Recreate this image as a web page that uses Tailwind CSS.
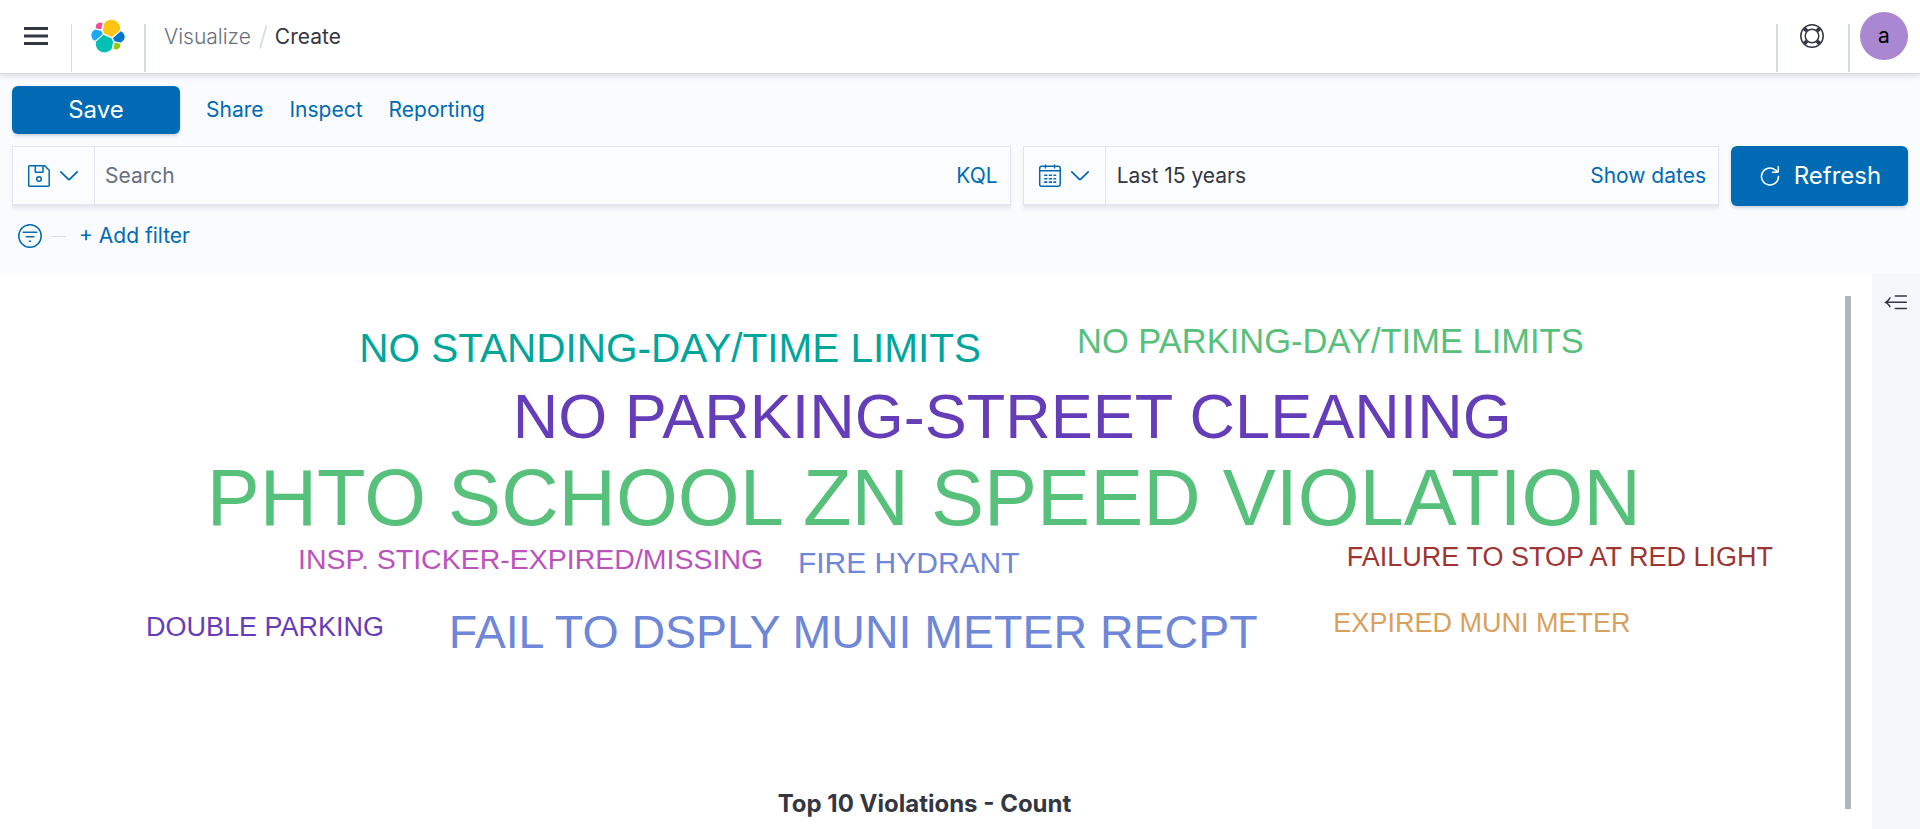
<!DOCTYPE html>
<html lang="en">
<head>
<meta charset="utf-8">
<title>Create - Visualize</title>
<script src="https://cdn.jsdelivr.net/npm/@tailwindcss/browser@4"></script>
</head>
<body class="flex min-h-screen flex-col bg-white font-[Inter,sans-serif] text-[21px] leading-8 text-[#343741]">

<header class="relative flex h-[74px] items-center justify-between border-b border-[#d3dae6] bg-white pb-px shadow-[0_3px_4px_rgba(152,162,179,0.25)]">
  <div class="flex h-full items-center">
    <button type="button" aria-label="Toggle navigation" class="flex w-[71px] justify-center">
      <svg class="size-6" viewBox="0 0 16 16" fill="currentColor"><path d="M0 2h16v2H0zM0 7h16v2H0zM0 12h16v2H0z"/></svg>
    </button>
    <a href="#" aria-label="Elastic home" class="flex h-12 w-[75px] items-center justify-center self-end border-l border-r-2 border-[#d3dae6]">
      <svg class="-mt-6 size-9" viewBox="0 0 32 32">
        <path fill="#FEC514" d="M12.58 13.787l7.002 3.211 7.066-6.213a7.849 7.849 0 0 0 .152-1.557c0-4.287-3.487-7.775-7.775-7.775a7.765 7.765 0 0 0-6.396 3.357l-1.176 6.11z"/>
        <path fill="#00BFB3" d="M5.333 21.215a7.876 7.876 0 0 0-.149 1.571c0 4.301 3.498 7.8 7.8 7.8a7.78 7.78 0 0 0 6.43-3.394l1.166-6.094-1.557-2.988-7.03-3.211z"/>
        <path fill="#F04E98" d="M5.288 9.067l4.8 1.137L11.14 4.73a3.785 3.785 0 0 0-6.054 3.012c0 .455.068.9.202 1.325z"/>
        <path fill="#1BA9F5" d="M4.872 10.214c-2.144.71-3.653 2.793-3.653 5.054a5.332 5.332 0 0 0 3.41 4.976l6.734-6.102-1.236-2.654z"/>
        <path fill="#93C90E" d="M20.873 27.186a3.782 3.782 0 0 0 6.059-2.991 3.77 3.77 0 0 0-.2-1.31l-4.79-1.12z"/>
        <path fill="#0077CC" d="M21.848 20.563l5.28 1.236a5.34 5.34 0 0 0 3.636-5.05 5.335 5.335 0 0 0-3.42-4.97l-6.91 6.05z"/>
      </svg>
    </a>
    <nav aria-label="Breadcrumbs" class="flex items-center gap-[7px] pt-px pl-[18px]">
      <a href="#" class="font-light text-[#69707d]">Visualize</a>
      <svg class="h-6 w-2.5" viewBox="0 0 10 24" fill="none" stroke="#d3dae6" stroke-width="1.6"><path d="M2 23.500 8.500.5"/></svg>
      <span aria-current="page">Create</span>
    </nav>
  </div>
  <div class="flex h-full items-end">
    <button type="button" aria-label="Help" class="flex h-12 w-[72px] justify-center border-l-2 border-[#d3dae6] pr-0.5">
      <svg class="size-6" viewBox="0 0 24 24" fill="none" stroke="currentColor" stroke-width="1.500"><circle cx="12" cy="12" r="11.200"/><circle cx="12" cy="12" r="6.800"/><path stroke-width="3.800" d="M4.300 4.300 7 7M19.700 4.300 17 7M4.300 19.700 7 17M19.700 19.700 17 17"/></svg>
    </button>
    <div class="flex h-12 w-[72px] border-l-2 border-[#d3dae6] pl-2.5">
      <button type="button" aria-label="Account menu" class="-mt-3 size-12 rounded-full bg-[#aa87d1] text-black">a</button>
    </div>
  </div>
</header>

<div class="flex flex-col gap-3 bg-[#fafbfd] px-3 pt-3 pb-[21px]">
  <nav aria-label="Actions" class="flex items-center gap-[26px] text-[#006bb4]">
    <button type="button" class="h-12 w-42 rounded-md bg-[#006bb4] text-2xl text-white shadow-[0_2px_3px_rgba(54,97,126,0.25)]">Save</button>
    <button type="button">Share</button>
    <button type="button">Inspect</button>
    <button type="button">Reporting</button>
  </nav>

  <div class="flex h-15 gap-3">
    <div class="flex min-w-0 flex-[999] border border-[#e3e6f0] border-b-2 bg-[#fbfcfd] shadow-[0_3px_3px_rgba(152,162,179,0.18)]">
      <button type="button" aria-label="Saved queries" class="flex w-[82px] flex-none items-center gap-1.5 border-r border-[#e3e6f0] pl-3.5 text-[#006bb4]">
        <svg class="size-6" viewBox="0 0 24 24" fill="none" stroke="currentColor" stroke-width="1.500"><path d="M2.500 1.700h15.200l4.500 4.500v15.200a.8.8 0 0 1-.8.8H2.500a.8.800 0 0 1-.8-.8V2.500a.8.8 0 0 1 .8-.8zM8.300 2v5.700a.6.600 0 0 0 .6.600h6.500a.6.600 0 0 0 .6-.6V2"/><circle cx="12" cy="15" r="2.300"/></svg>
        <svg class="size-6" viewBox="0 0 24 24" fill="none" stroke="currentColor" stroke-width="1.700" stroke-linecap="round"><path d="m3.800 7.800 7.400 7.300q.8.800 1.600 0l7.400-7.300"/></svg>
      </button>
      <input type="text" aria-label="Search" placeholder="Search" class="min-w-0 flex-1 bg-transparent px-2.5 outline-none placeholder:text-[#69707d]">
      <button type="button" class="px-3 text-[#006bb4]">KQL</button>
    </div>
    <div class="flex min-w-0 flex-[696] border border-[#e3e6f0] border-b-2 bg-[#fbfcfd] shadow-[0_3px_3px_rgba(152,162,179,0.18)]">
      <button type="button" aria-label="Quick date ranges" class="flex w-[82px] flex-none items-center gap-1.5 border-r border-[#e3e6f0] pl-3.5 text-[#006bb4]">
        <svg class="size-6" viewBox="0 0 24 24" fill="none" stroke="currentColor" stroke-width="1.500"><rect x="1.700" y="2.300" width="20.500" height="20" rx="2"/><path d="M1.700 6.800h20.500M7.500.500v4M16.500.500v4"/><path stroke-width="1.600" stroke-dasharray="3.200 1.400" d="M6.200 11.300h12M6.200 14.700h12M6.200 18.100h12"/></svg>
        <svg class="size-6" viewBox="0 0 24 24" fill="none" stroke="currentColor" stroke-width="1.700" stroke-linecap="round"><path d="m3.800 7.800 7.400 7.300q.8.800 1.600 0l7.400-7.300"/></svg>
      </button>
      <button type="button" class="min-w-0 flex-1 truncate pl-[11px] text-left">Last 15 years</button>
      <button type="button" class="flex-none px-3 text-[#006bb4]">Show dates</button>
    </div>
    <button type="button" class="flex w-[177px] flex-none items-center justify-center gap-3 rounded-md bg-[#006bb4] text-2xl text-white shadow-[0_2px_3px_rgba(54,97,126,0.25)]">
      <svg class="size-6" viewBox="0 0 24 24" fill="none" stroke="currentColor" stroke-width="1.500" stroke-linecap="round" stroke-linejoin="round"><path d="M20.500 12.500a8.500 8.500 0 1 1-3.300-6.700q1.300 1 2.200 2.200M20.300 2.700v4.500a1 1 0 0 1-1 1H14.500"/></svg>
      Refresh
    </button>
  </div>

  <div class="flex items-center px-1.5 pt-0.5 text-[#006bb4]">
    <button type="button" aria-label="Filter options">
      <svg class="size-6" viewBox="0 0 24 24" fill="none" stroke="currentColor" stroke-width="1.500" stroke-linecap="round"><circle cx="12" cy="12" r="11.200"/><path d="M5.200 8.300h13.600M8.200 12.700h7.600M11.400 17.200h1.200"/></svg>
    </button>
    <div class="ml-[9px] h-px w-[15px] bg-[#d3dae6]"></div>
    <button type="button" class="ml-[13px]">+ Add filter</button>
  </div>
</div>

<main class="flex flex-1">
  <section class="flex min-w-0 flex-1 pr-[21px] pl-1">
    <div class="flex min-w-0 flex-1 flex-col">
      <svg class="w-full font-['Liberation_Sans',Arial,sans-serif]" viewBox="0 0 1227 333" preserveAspectRatio="xMidYMin" text-anchor="middle" role="img" aria-label="Top 10 Violations tag cloud">
        <text x="444" y="59" font-size="27" fill="#00a69b">NO STANDING-DAY/TIME LIMITS</text>
        <text x="884" y="53" font-size="23" fill="#57c17b">NO PARKING-DAY/TIME LIMITS</text>
        <text x="672" y="110" font-size="42" fill="#663db8">NO PARKING-STREET CLEANING</text>
        <text x="613" y="168" font-size="53" fill="#57c17b">PHTO SCHOOL ZN SPEED VIOLATION</text>
        <text x="351" y="197" font-size="19" fill="#bc52bc">INSP. STICKER-EXPIRED/MISSING</text>
        <text x="603" y="200" font-size="20" fill="#6f87d8">FIRE HYDRANT</text>
        <text x="1037" y="195" font-size="18" fill="#9e3533">FAILURE TO STOP AT RED LIGHT</text>
        <text x="174" y="242" font-size="18" fill="#663db8">DOUBLE PARKING</text>
        <text x="566" y="250" font-size="31" fill="#6f87d8">FAIL TO DSPLY MUNI METER RECPT</text>
        <text x="985" y="239" font-size="18" fill="#daa05d">EXPIRED MUNI METER</text>
      </svg>
      <h2 class="mt-auto pb-[9px] text-center text-2xl font-bold">Top 10 Violations - Count</h2>
    </div>
    <div class="mt-[23px] mb-5 w-1.5 flex-none bg-[#b1b5be]"></div>
  </section>
  <aside class="flex w-12 flex-none justify-center bg-[#f5f7fb] pt-[17px]">
    <button type="button" aria-label="Open editor" class="h-6">
      <svg class="size-6" viewBox="0 0 24 24" fill="none" stroke="currentColor" stroke-width="1.500" stroke-linecap="round"><path d="M11.300 6h11M1.800 12.300h20.500M11.300 18.500h11M6 7.800q-1.500 2.700-4.300 4.500Q4.500 14 6 16.700"/></svg>
    </button>
  </aside>
</main>
</body>
</html>
